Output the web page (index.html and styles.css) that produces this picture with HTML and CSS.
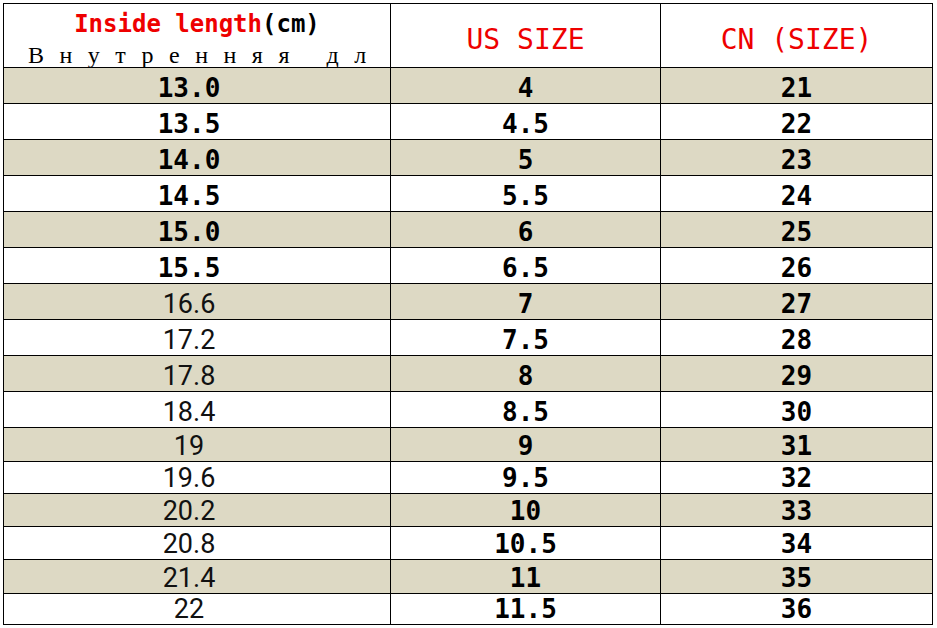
FILE: index.html
```html
<!DOCTYPE html>
<html lang="en">
<head>
<meta charset="utf-8">
<title>Size chart</title>
<link rel="stylesheet" href="styles.css">
</head>
<body>
<div class="chart">
  <div class="row head">
    <div class="cell c1 hcell">
      <div class="h-en"><span class="red">Inside length</span>(cm)</div>
      <div class="h-ru">Внутренняя дл</div>
    </div>
    <div class="cell hd">US SIZE</div>
    <div class="cell hd">CN (SIZE)</div>
  </div>
  <div class="row tan"><div class="cell c1">13.0</div><div class="cell">4</div><div class="cell">21</div></div>
  <div class="row"><div class="cell c1">13.5</div><div class="cell">4.5</div><div class="cell">22</div></div>
  <div class="row tan"><div class="cell c1">14.0</div><div class="cell">5</div><div class="cell">23</div></div>
  <div class="row"><div class="cell c1">14.5</div><div class="cell">5.5</div><div class="cell">24</div></div>
  <div class="row tan"><div class="cell c1">15.0</div><div class="cell">6</div><div class="cell">25</div></div>
  <div class="row"><div class="cell c1">15.5</div><div class="cell">6.5</div><div class="cell">26</div></div>
  <div class="row tan"><div class="cell c1 sans">16.6</div><div class="cell">7</div><div class="cell">27</div></div>
  <div class="row"><div class="cell c1 sans">17.2</div><div class="cell">7.5</div><div class="cell">28</div></div>
  <div class="row tan"><div class="cell c1 sans">17.8</div><div class="cell">8</div><div class="cell">29</div></div>
  <div class="row"><div class="cell c1 sans">18.4</div><div class="cell">8.5</div><div class="cell">30</div></div>
  <div class="row tan"><div class="cell c1 sans">19</div><div class="cell">9</div><div class="cell">31</div></div>
  <div class="row"><div class="cell c1 sans">19.6</div><div class="cell">9.5</div><div class="cell">32</div></div>
  <div class="row tan"><div class="cell c1 sans">20.2</div><div class="cell">10</div><div class="cell">33</div></div>
  <div class="row"><div class="cell c1 sans">20.8</div><div class="cell">10.5</div><div class="cell">34</div></div>
  <div class="row tan"><div class="cell c1 sans">21.4</div><div class="cell">11</div><div class="cell">35</div></div>
  <div class="row"><div class="cell c1 sans">22</div><div class="cell">11.5</div><div class="cell">36</div></div>
</div>
</body>
</html>
```

FILE: styles.css
```css
html, body {
  margin: 0;
  padding: 0;
  background: #ffffff;
}

body {
  padding: 3px 0 0 3px;
}

.chart {
  display: grid;
  grid-template-columns: 387px 270px 272px;
  grid-template-rows: 64px repeat(10, 36px) 34px 32px 33px 33px 34px 31px;
  border-top: 1px solid #000;
  border-left: 1px solid #000;
  width: max-content;
  font-family: "DejaVu Sans Mono", "Liberation Mono", monospace;
  color: #000;
}

.row {
  display: contents;
}

.cell {
  border-right: 1px solid #000;
  border-bottom: 1px solid #000;
  display: flex;
  align-items: flex-end;
  justify-content: center;
  font-size: 26px;
  font-weight: bold;
  line-height: 26px;
  padding-bottom: 2px;
  white-space: nowrap;
}

.row.tan .cell {
  background: #ddd9c4;
}

.c1 {
  padding-right: 16px;
}

.c1.sans {
  font-family: Roboto, "Open Sans", sans-serif;
  font-weight: normal;
  font-size: 27px;
  line-height: 27px;
  padding-bottom: 1px;
  color: #111;
}

.hcell {
  flex-direction: column;
  justify-content: flex-start;
  align-items: center;
  padding: 8px 0 0 0;
}

.h-en {
  font-size: 24px;
  line-height: 24px;
  font-weight: bold;
}

.red {
  color: #ee0000;
}

.h-ru {
  margin-top: 7px;
  font-family: "Liberation Serif", "DejaVu Serif", serif;
  font-weight: normal;
  font-size: 24px;
  line-height: 24px;
  letter-spacing: 15.5px;
  padding-left: 15.5px;
}

.hd {
  color: #ee0000;
  font-weight: normal;
  font-size: 28px;
  line-height: 28px;
  padding-bottom: 13px;
}
```
